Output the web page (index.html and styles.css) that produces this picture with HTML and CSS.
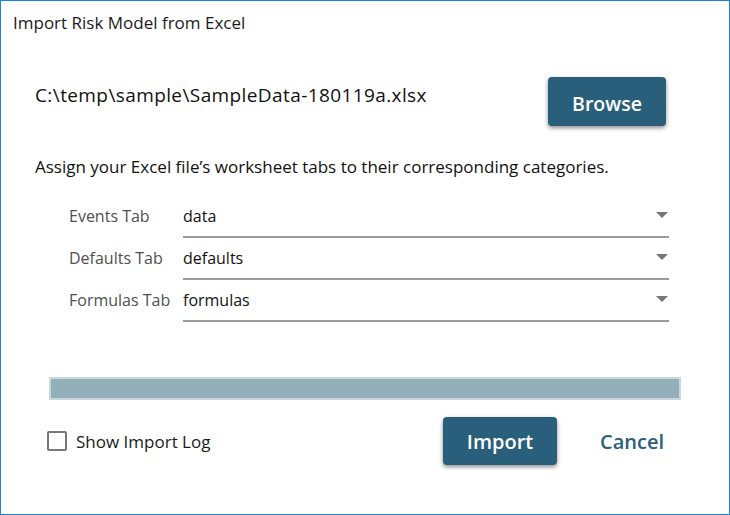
FILE: index.html
```html
<!DOCTYPE html>
<html>
<head>
<meta charset="utf-8">
<link rel="stylesheet" href="styles.css">
</head>
<body>
<div class="window">
  <div class="title">Import Risk Model from Excel</div>
  <div class="file-row">
    <div class="path">C:\temp\sample\SampleData-180119a.xlsx</div>
    <button class="btn browse">Browse</button>
  </div>
  <div class="desc">Assign your Excel file’s worksheet tabs to their corresponding categories.</div>
  <div class="fields">
    <div class="label">Events Tab</div>
    <div class="select"><span>data</span><span class="arrow"></span></div>
    <div class="label">Defaults Tab</div>
    <div class="select"><span>defaults</span><span class="arrow"></span></div>
    <div class="label">Formulas Tab</div>
    <div class="select"><span>formulas</span><span class="arrow"></span></div>
  </div>
  <div class="progress"><div class="progress-fill"></div></div>
  <div class="footer">
    <label class="check"><span class="box"></span><span>Show Import Log</span></label>
    <div class="actions">
      <button class="btn import">Import</button>
      <button class="cancel">Cancel</button>
    </div>
  </div>
</div>
</body>
</html>
```
FILE: styles.css
```css
html, body {
  margin: 0;
  padding: 0;
  background: #ffffff;
}
.window {
  box-sizing: border-box;
  width: 730px;
  height: 515px;
  border: 1px solid #1c86d6;
  font-family: "Open Sans", "Noto Sans", sans-serif;
  color: #111;
  overflow: hidden;
}
.title {
  margin: 12px 0 0 12px;
  font-size: 17px;
  line-height: 20px;
  color: #1a1a1a;
}
.file-row {
  display: flex;
  align-items: flex-start;
  justify-content: space-between;
  margin: 44px 63px 0 34px;
}
.path {
  margin-top: 6px;
  font-size: 19px;
  line-height: 24px;
  letter-spacing: 0.4px;
}
.btn {
  font-family: "Open Sans", "Noto Sans", sans-serif;
  background: #2a5f7b;
  color: #fff;
  border: none;
  border-radius: 4px;
  font-weight: 600;
  font-size: 19.5px;
  box-shadow: 0 2px 4px rgba(0,0,0,0.45);
  cursor: pointer;
}
.browse {
  width: 118px;
  height: 49px;
  padding-top: 4px;
}
.desc {
  margin: 30px 0 0 34px;
  font-size: 17px;
  line-height: 22px;
}
.fields {
  display: grid;
  grid-template-columns: 114px 1fr;
  grid-auto-rows: 42px;
  margin: 18px 60px 0 68px;
}
.label {
  font-size: 16px;
  line-height: 22px;
  padding-top: 9px;
  color: #505050;
}
.select {
  display: flex;
  justify-content: space-between;
  align-items: flex-start;
  border-bottom: 2px solid #9a9a9a;
  font-size: 16px;
  line-height: 22px;
  padding-top: 9px;
  box-sizing: border-box;
  height: 42px;
}
.arrow {
  width: 0;
  height: 0;
  margin: 7px 1px 0 0;
  border-left: 6px solid transparent;
  border-right: 6px solid transparent;
  border-top: 6px solid #777;
}
.progress {
  box-sizing: border-box;
  margin: 55px 48px 0 48px;
  height: 23px;
  border: 1px solid #c9d8dd;
  background: #c9d8dd;
  padding: 1px;
}
.progress-fill {
  height: 100%;
  background: #93afba;
}
.footer {
  display: flex;
  justify-content: space-between;
  align-items: center;
  margin: 17px 65px 0 46px;
}
.check {
  display: flex;
  align-items: center;
  font-size: 17px;
  color: #1a1a1a;
}
.box {
  box-sizing: border-box;
  width: 20px;
  height: 20px;
  border: 2px solid #777;
  border-radius: 2px;
  margin-right: 9px;
}
.actions {
  display: flex;
  align-items: center;
}
.import {
  width: 114px;
  height: 48px;
  font-size: 20px;
}
.cancel {
  margin-left: 43px;
  background: none;
  border: none;
  padding: 0;
  font-family: "Open Sans", "Noto Sans", sans-serif;
  font-size: 20px;
  font-weight: 600;
  color: #2a5f7b;
}
```
